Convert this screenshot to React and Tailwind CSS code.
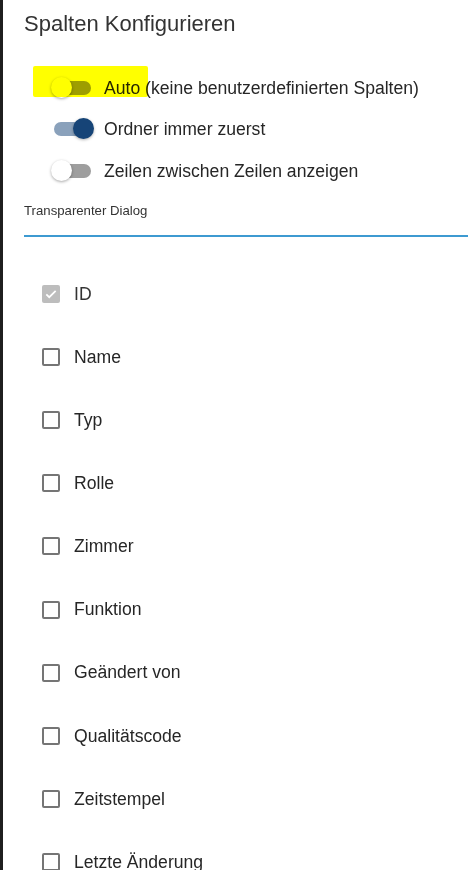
// App.jsx
// Column configuration panel: switches on top, list of column checkboxes below.

const columns = [
  { label: 'ID', checked: true, disabled: true },
  { label: 'Name' },
  { label: 'Typ' },
  { label: 'Rolle' },
  { label: 'Zimmer' },
  { label: 'Funktion' },
  { label: 'Geändert von' },
  { label: 'Qualitätscode' },
  { label: 'Zeitstempel' },
  { label: 'Letzte Änderung' },
];

function Toggle({ on }) {
  return (
    <div className="relative w-[44px] h-[22px] shrink-0">
      <div
        className={
          'absolute left-[3px] top-[4px] w-[37px] h-[14px] rounded-full ' +
          (on ? 'bg-[#8aa1bb]' : 'bg-[#9e9e9e]')
        }
      />
      {on ? (
        <div className="absolute left-[22px] top-[0px] w-[21px] h-[21px] rounded-full bg-[#164477] shadow-[0_1px_3px_rgba(0,0,0,0.3)]" />
      ) : (
        <div className="absolute left-0 top-[0px] w-[21px] h-[21px] rounded-full bg-white shadow-[0_1px_3px_rgba(0,0,0,0.35)]" />
      )}
    </div>
  );
}

function SwitchRow({ on, children, highlight }) {
  return (
    <div className="relative flex items-center h-[41.5px] pl-[27px] gap-[9px]">
      <Toggle on={on} />
      <span className="text-[17.6px] text-[#262626] whitespace-nowrap">{children}</span>
      {highlight && (
        <div className="absolute left-[9px] top-[-1px] w-[115px] h-[31px] bg-[#ffff00] mix-blend-multiply rounded-[2px]" />
      )}
    </div>
  );
}

function CheckRow({ label, checked, disabled }) {
  return (
    <div className="flex items-center h-[63.1px] pl-[18px] gap-[14px]">
      {checked ? (
        <div className="w-[18px] h-[18px] rounded-[2px] bg-[#bdbdbd] flex items-center justify-center">
          <svg width="14" height="14" viewBox="0 0 24 24" fill="none">
            <path d="M4 12.5l5 5L20 6.5" stroke="white" strokeWidth="3" />
          </svg>
        </div>
      ) : (
        <div className="w-[18px] h-[18px] rounded-[2px] border-2 border-[#757575]" />
      )}
      <span className={'text-[17.6px] ' + (disabled ? 'text-[#333]' : 'text-[#262626]')}>{label}</span>
    </div>
  );
}

export default function App() {
  return (
    <div className="flex w-[468px] h-[870px] overflow-hidden bg-white font-['Liberation_Sans',Arial,sans-serif]">
      <div className="w-[3px] shrink-0 bg-[#1f1f1f]" />
      <div className="flex-1 flex flex-col pl-[21px]">
        <h2 className="mt-[8px] text-[22px] leading-[32px] text-[#333]">Spalten Konfigurieren</h2>

        <div className="mt-[27px] flex flex-col">
          <SwitchRow highlight>Auto (keine benutzerdefinierten Spalten)</SwitchRow>
          <SwitchRow on>Ordner immer zuerst</SwitchRow>
          <SwitchRow>Zeilen zwischen Zeilen anzeigen</SwitchRow>
        </div>

        <div className="mt-[11.5px] text-[13.2px] leading-[16px] text-[#333]">Transparenter Dialog</div>
        <div className="mt-[16px] h-[2px] bg-[#3d9ad1] shrink-0" />

        <div className="mt-[25.5px] flex flex-col">
          {columns.map((c) => (
            <CheckRow key={c.label} {...c} />
          ))}
        </div>
      </div>
    </div>
  );
}
